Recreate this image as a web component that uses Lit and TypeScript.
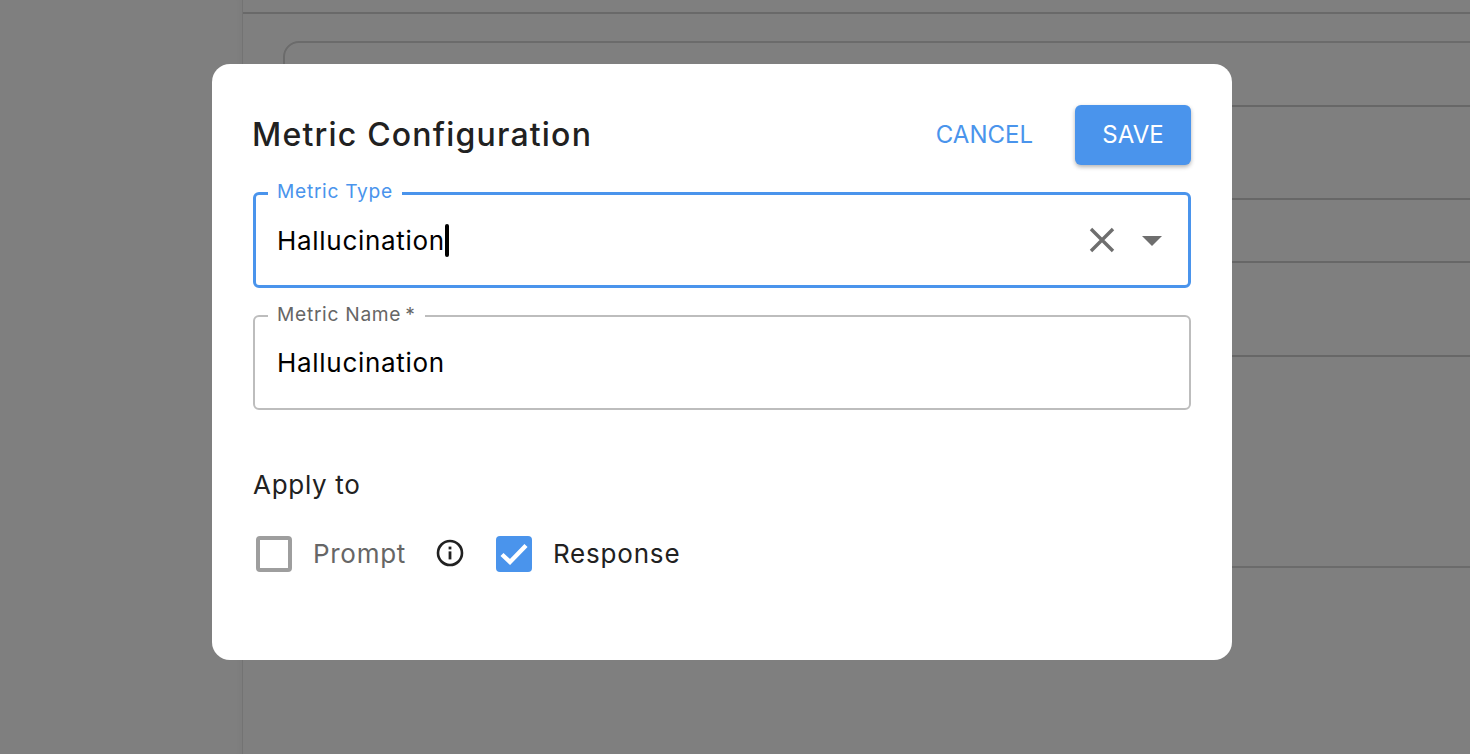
import { LitElement, html, css } from "lit";
import { customElement } from "lit/decorators.js";

@customElement("app-root")
export class AppRoot extends LitElement {
  static styles = css`
    :host { display: block; width: 1470px; height: 754px; overflow: hidden; position: relative; font-family: Inter, "Liberation Sans", sans-serif; background: #fff; }
    * { box-sizing: border-box; }
    .page { display: flex; height: 754px; }
    .side { width: 243px; flex: none; background: #fff; border-right: 1px solid #e6e6e6; box-shadow: inset -7px 0 5px -3px rgba(0,0,0,.025); }
    .main { flex: 1; min-width: 0; }
    .top { height: 14px; border-bottom: 2px solid #d2d2d2; }
    .box { margin: 27px -40px 0 40px; border: 2px solid #d6d6d6; border-radius: 16px; display: flex; flex-direction: column; }
    .row { border-bottom: 2px solid #cfcfcf; flex: none; }
    .row:last-child { border-bottom: 0; }
    .overlay { position: absolute; inset: 0; background: rgba(0,0,0,.5); padding: 64px 238px 94px 212px; }
    .modal { height: 596px; background: #fff; border-radius: 18px; padding: 41px; display: flex; flex-direction: column; }
    .head { display: flex; align-items: center; height: 60px; }
    h2 { margin: 0 0 2px -1px; flex: 1; font-weight: 500; font-size: 32px; color: #212121; letter-spacing: 1.2px; }
    .cancel, .save { font: 400 24px Inter, "Liberation Sans", sans-serif; border: 0; background: none; padding: 0 0 2px; }
    .cancel { color: #4a94ec; margin-right: 42px; }
    .save { width: 116px; height: 60px; border-radius: 6px; background: #4a94ec; color: #fff; box-shadow: 0 2px 4px rgba(0,0,0,.3); }
    .field { position: relative; height: 95px; border: 2px solid #bdbdbd; border-radius: 6px; display: flex; align-items: center; padding: 0 22px; font-size: 26px; letter-spacing: 0.7px; color: #000; }
    .field.focus { border: 3px solid #4a94ec; height: 96px; margin-top: 27px; padding: 0 21px; }
    .field.name { margin-top: 27px; }
    .legend { position: absolute; top: -15px; left: 13px; padding: 0 9px; background: #fff; font-size: 19.2px; line-height: 24px; letter-spacing: 0.7px; color: #666; white-space: nowrap; }
    .focus .legend { color: #4a94ec; top: -16px; left: 12px; }
    .ast { margin-left: 4px; }
    .value { flex: none; }
    .caret { width: 4px; height: 33px; background: #000; border-radius: 2px; }
    .spacer { flex: 1; }
    .clear { display: block; margin-right: 26px; }
    .arrow { display: block; margin: 1px 5px 0 0; }
    .apply { margin-top: 56px; font-size: 26px; line-height: 38px; color: #212121; letter-spacing: 0.7px; }
    .checks { display: flex; align-items: center; margin-top: 31px; font-size: 26px; letter-spacing: 0.7px; height: 36px; margin-left: 3px; }
    .cb { width: 36px; height: 36px; border-radius: 4px; flex: none; border: 4px solid #9e9e9e; margin-top: 2px; }
    .cb.on { border: 0; background: #4a94ec; }
    .cb svg { display: block; }
    .lbl { margin-left: 21px; color: #666; }
    .lbl.on { color: #212121; letter-spacing: 0.8px; }
    .info { display: block; margin: 0 32px 0 30px; flex: none; }
  `;

  render() {
    const rows = [64, 93, 63, 94, 209];
    return html`
      <div class="page">
        <div class="side"></div>
        <div class="main">
          <div class="top"></div>
          <div class="box">${rows.map((h) => html`<div class="row" style="height:${h}px"></div>`)}</div>
        </div>
      </div>
      <div class="overlay">
        <div class="modal">
          <div class="head">
            <h2>Metric Configuration</h2>
            <button class="cancel">CANCEL</button>
            <button class="save">SAVE</button>
          </div>
          <div class="field focus">
            <span class="legend">Metric Type</span>
            <span class="value">Hallucination</span><span class="caret"></span>
            <span class="spacer"></span>
            <svg class="clear" width="28" height="28" viewBox="0 0 28 28"><path d="M3 3L25 25M25 3L3 25" stroke="#6e6e6e" stroke-width="3.4" fill="none"/></svg>
            <svg class="arrow" width="20" height="10" viewBox="0 0 20 10"><path d="M0 0H20L10 10Z" fill="#6e6e6e"/></svg>
          </div>
          <div class="field name">
            <span class="legend">Metric Name<span class="ast">*</span></span>
            <span class="value">Hallucination</span>
          </div>
          <div class="apply">Apply to</div>
          <div class="checks">
            <span class="cb"></span>
            <span class="lbl">Prompt</span>
            <svg class="info" width="28" height="28" viewBox="0 0 28 28"><circle cx="14" cy="14" r="12" fill="none" stroke="#212121" stroke-width="2.6"/><rect x="12.6" y="12.4" width="2.8" height="8" fill="#212121"/><rect x="12.6" y="7.6" width="2.8" height="2.8" fill="#212121"/></svg>
            <span class="cb on"><svg width="36" height="36" viewBox="0 0 36 36"><path d="M6 18.5L14 26L30 9.5" fill="none" stroke="#fff" stroke-width="4.4"/></svg></span>
            <span class="lbl on">Response</span>
          </div>
        </div>
      </div>
    `;
  }
}
